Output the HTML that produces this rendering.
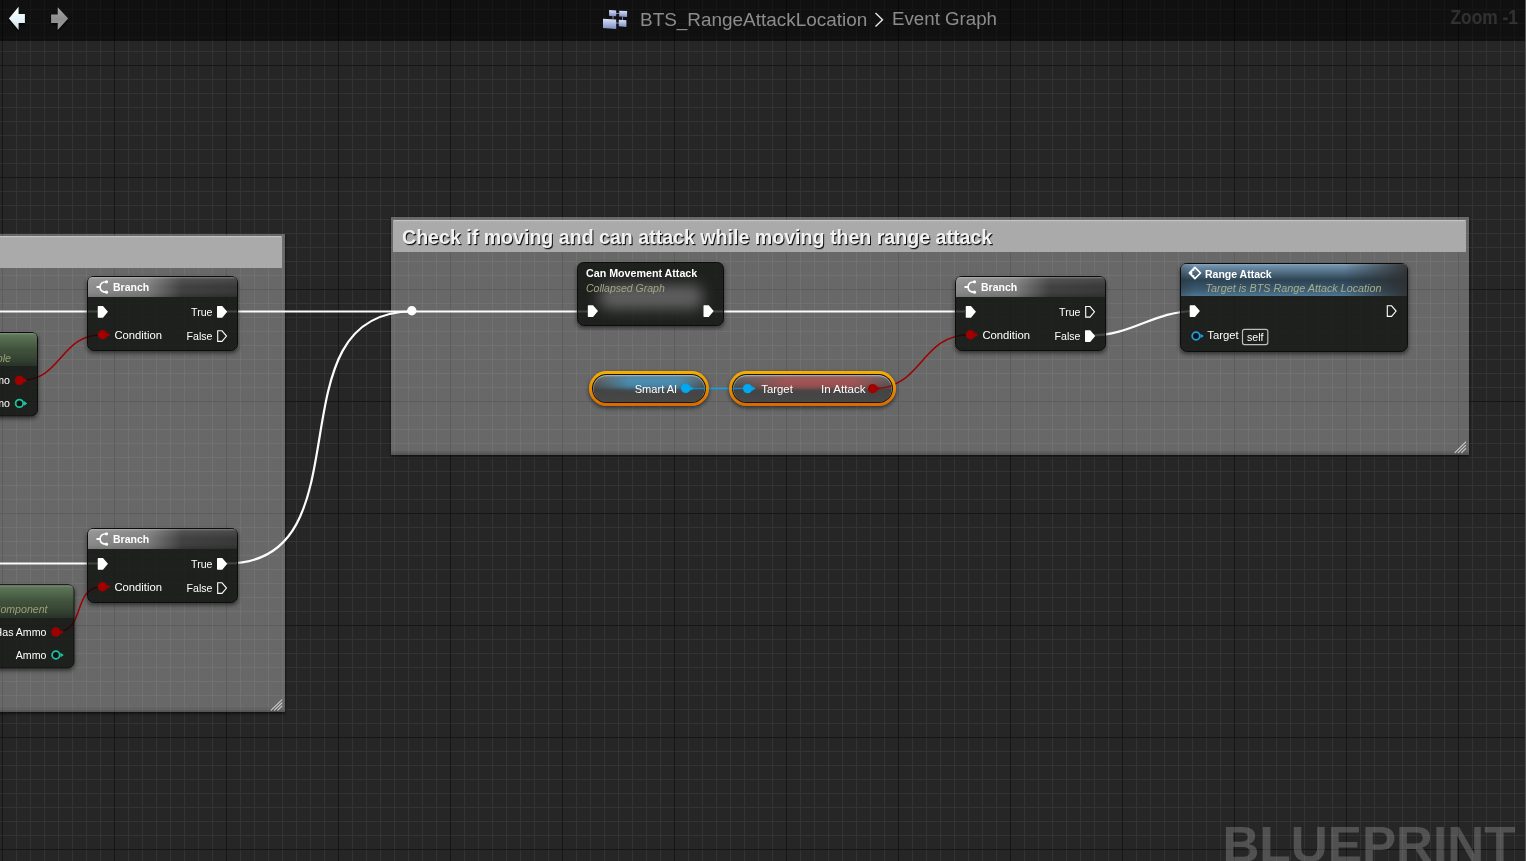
<!DOCTYPE html>
<html><head><meta charset="utf-8">
<style>
html,body{margin:0;padding:0;}
body{width:1526px;height:861px;overflow:hidden;position:relative;background:#262626;font-family:"Liberation Sans",sans-serif;}
#grid{position:absolute;left:0;top:0;width:1526px;height:861px;
background-image:
 linear-gradient(to right,#161616 1px,transparent 1px),
 linear-gradient(to bottom,#161616 1px,transparent 1px),
 linear-gradient(to right,#333333 1px,transparent 1px),
 linear-gradient(to bottom,#333333 1px,transparent 1px);
background-size:112px 100%,100% 112px,14px 100%,100% 14px;
background-position:2px 0,0 65px,2px 0,0 9px;}
svg{position:absolute;left:0;top:0;will-change:transform;}
text{font-family:"Liberation Sans",sans-serif;}
</style></head><body>
<div id="grid"></div>
<svg width="1526" height="861" viewBox="0 0 1526 861">

<defs>
  <filter id="nshd" x="-20%" y="-30%" width="140%" height="170%" color-interpolation-filters="sRGB">
    <feGaussianBlur stdDeviation="2"/>
  </filter>
  <filter id="cshd" x="-5%" y="-5%" width="110%" height="115%" color-interpolation-filters="sRGB">
    <feGaussianBlur stdDeviation="1.6"/>
  </filter>
  <filter id="tshd" x="-5%" y="-20%" width="110%" height="150%" color-interpolation-filters="sRGB">
    <feDropShadow dx="1" dy="1.2" stdDeviation="0.6" flood-color="#000" flood-opacity="0.9"/>
  </filter>
  <filter id="blur2" x="-20%" y="-80%" width="140%" height="260%" color-interpolation-filters="sRGB"><feGaussianBlur stdDeviation="2"/></filter>
  <filter id="blur3" x="-30%" y="-80%" width="160%" height="260%" color-interpolation-filters="sRGB"><feGaussianBlur stdDeviation="3"/></filter>
  <filter id="blur6" x="-50%" y="-100%" width="200%" height="300%" color-interpolation-filters="sRGB"><feGaussianBlur stdDeviation="7"/></filter>
  <filter id="arrShd" x="-30%" y="-30%" width="160%" height="180%" color-interpolation-filters="sRGB"><feDropShadow dx="0" dy="2" stdDeviation="1.2" flood-color="#000" flood-opacity="0.8"/></filter>
  <linearGradient id="gBrH" x1="0" y1="0" x2="1" y2="0">
    <stop offset="0" stop-color="#8a8a8a"/>
    <stop offset="0.4" stop-color="#7a7a7a"/>
    <stop offset="0.63" stop-color="#3b3b3b"/>
    <stop offset="1" stop-color="#313231"/>
  </linearGradient>
  <linearGradient id="gGloss" x1="0" y1="0" x2="0" y2="1">
    <stop offset="0" stop-color="#fff" stop-opacity="0.35"/>
    <stop offset="0.1" stop-color="#fff" stop-opacity="0.12"/>
    <stop offset="0.5" stop-color="#fff" stop-opacity="0.03"/>
    <stop offset="1" stop-color="#000" stop-opacity="0.12"/>
  </linearGradient>
  <linearGradient id="gGlossG" x1="0" y1="0" x2="0" y2="1">
    <stop offset="0" stop-color="#fff" stop-opacity="0.22"/>
    <stop offset="0.07" stop-color="#fff" stop-opacity="0.05"/>
    <stop offset="0.5" stop-color="#fff" stop-opacity="0"/>
    <stop offset="1" stop-color="#000" stop-opacity="0.05"/>
  </linearGradient>
  <linearGradient id="gFnH" x1="0" y1="0" x2="0" y2="1">
    <stop offset="0" stop-color="#85a4bd"/>
    <stop offset="0.08" stop-color="#6d8da7"/>
    <stop offset="0.5" stop-color="#2d4353"/>
    <stop offset="0.8" stop-color="#3a5a70"/>
    <stop offset="1" stop-color="#4e7792"/>
  </linearGradient>
  <linearGradient id="gFnR" x1="0" y1="0" x2="1" y2="0">
    <stop offset="0" stop-color="#222" stop-opacity="0.25"/>
    <stop offset="0.06" stop-color="#222" stop-opacity="0"/>
    <stop offset="0.72" stop-color="#2a2a2a" stop-opacity="0"/>
    <stop offset="1" stop-color="#2e2e2e" stop-opacity="0.9"/>
  </linearGradient>
  <linearGradient id="gGrH" x1="0" y1="0" x2="0" y2="1">
    <stop offset="0" stop-color="#587252"/>
    <stop offset="0.5" stop-color="#3f513b"/>
    <stop offset="1" stop-color="#2a3529"/>
  </linearGradient>
  <linearGradient id="gOrange" x1="0" y1="0" x2="0" y2="1">
    <stop offset="0" stop-color="#f6b000"/>
    <stop offset="1" stop-color="#d86800"/>
  </linearGradient>
  <linearGradient id="gPill" x1="0" y1="0" x2="0" y2="1">
    <stop offset="0" stop-color="#7c7c7c"/>
    <stop offset="0.15" stop-color="#626262"/>
    <stop offset="0.5" stop-color="#4a4a4a"/>
    <stop offset="0.52" stop-color="#434343"/>
    <stop offset="1" stop-color="#484848"/>
  </linearGradient>
  <linearGradient id="gCmtBot" x1="0" y1="0" x2="0" y2="1">
    <stop offset="0" stop-color="#000" stop-opacity="0"/>
    <stop offset="1" stop-color="#000" stop-opacity="0.22"/>
  </linearGradient>
  <linearGradient id="gArrL" x1="0" y1="0" x2="0" y2="1">
    <stop offset="0" stop-color="#ffffff"/><stop offset="0.6" stop-color="#e4f2f6"/><stop offset="1" stop-color="#c9dde4"/>
  </linearGradient>
  <linearGradient id="gArrR" x1="0" y1="0" x2="0" y2="1">
    <stop offset="0" stop-color="#a8a8a8"/><stop offset="0.5" stop-color="#8e8e8e"/><stop offset="1" stop-color="#9a9a9a"/>
  </linearGradient>
  <linearGradient id="gBpI" x1="0" y1="0" x2="0" y2="1">
    <stop offset="0" stop-color="#d8e0f8"/><stop offset="1" stop-color="#7f8fc4"/>
  </linearGradient>
</defs>

<mask id="cmask" maskUnits="userSpaceOnUse" x="0" y="0" width="1526" height="861"><rect x="0" y="0" width="1526" height="861" fill="#fff"/><rect x="-10" y="234" width="295" height="478" fill="#000"/><rect x="391" y="217" width="1078" height="238" fill="#000"/></mask>
<g mask="url(#cmask)" opacity="0.65"><g filter="url(#cshd)"><rect x="-10" y="235.5" width="295" height="478" fill="#000"/><rect x="391" y="218.5" width="1078" height="238" fill="#000"/></g></g>
<rect x="-10" y="234" width="295" height="478" fill="#fff" fill-opacity="0.304"/>
<rect x="-10" y="707" width="295" height="5" fill="url(#gCmtBot)"/>
<rect x="391" y="217" width="1078" height="238" fill="#fff" fill-opacity="0.304"/>
<rect x="391" y="450" width="1078" height="5" fill="url(#gCmtBot)"/>
<path d="M-10 268 V237.5 Q-10 236 -8.5 236 H280.5 Q282 236 282 237.5 V268 Z" fill="#aaaaaa"/>
<rect x="-10" y="236" width="291.5" height="1.2" fill="#c2c2c2"/>
<path d="M393 252 V221.5 Q393 220 394.5 220 H1464.5 Q1466 220 1466 221.5 V252 Z" fill="#aaaaaa"/>
<rect x="393.5" y="220" width="1072" height="1.2" fill="#c2c2c2"/>
<text x="402" y="244" font-size="19.6" font-weight="700" fill="#f2f2f2" filter="url(#tshd)">Check if moving and can attack while moving then range attack</text>
<path d="M271.2 710.2 L281.8 699.8000000000001 M274.40000000000003 710.2 L281.8 703.0 M277.8 710.2 L281.8 706.2" stroke="#cccccc" stroke-width="1.1" fill="none" stroke-linecap="round"/>
<path d="M1455.0 452.6 L1465.6 442.20000000000005 M1458.1999999999998 452.6 L1465.6 445.40000000000003 M1461.6 452.6 L1465.6 448.6" stroke="#cccccc" stroke-width="1.1" fill="none" stroke-linecap="round"/>
<path d="M222 311.5 H412" stroke="#fcfcfc" stroke-width="2.2" fill="none"/>
<path d="M227 563.5 C371 563.5 268 311.5 412 311.5" stroke="#fcfcfc" stroke-width="2.2" fill="none"/>
<path d="M222 563.5 H227.5" stroke="#fcfcfc" stroke-width="2.2" fill="none"/>
<path d="M0 311.5 H103" stroke="#fcfcfc" stroke-width="2.2" fill="none"/>
<path d="M0 563.5 H103" stroke="#fcfcfc" stroke-width="2.2" fill="none"/>
<path d="M412 311.5 H594" stroke="#fcfcfc" stroke-width="2.2" fill="none"/>
<path d="M708 311.5 H965" stroke="#fcfcfc" stroke-width="2.2" fill="none"/>
<path d="M1090 335.5 C1133.5 335.5 1152.5 311 1196 311" stroke="#fcfcfc" stroke-width="2.2" fill="none"/>
<path d="M20 380.4 C62.5 380.4 59.5 334.8 102 334.8" stroke="#a00000" stroke-width="1.5" fill="none"/>
<path d="M56 632 C86.4 632 71.6 586.8 102 586.8" stroke="#a00000" stroke-width="1.5" fill="none"/>
<path d="M873 388.6 C923.3 388.6 919.7 334.8 970 334.8" stroke="#a00000" stroke-width="1.5" fill="none"/>
<path d="M686 388.5 H748" stroke="#00a8f0" stroke-width="1.5" fill="none"/>
<mask id="nmask" maskUnits="userSpaceOnUse" x="-100" y="0" width="1700" height="861"><rect x="-100" y="0" width="1700" height="861" fill="#fff"/><rect x="-60" y="332" width="98" height="84.5" rx="6" fill="#000"/><rect x="-60" y="584.3" width="134.5" height="84.20000000000005" rx="6" fill="#000"/><rect x="87" y="276" width="151" height="75" rx="6" fill="#000"/><rect x="87" y="528" width="151" height="75" rx="6" fill="#000"/><rect x="955" y="276" width="151" height="75" rx="6" fill="#000"/><rect x="577" y="262" width="147" height="64" rx="6" fill="#000"/><rect x="1180" y="263" width="228" height="89" rx="6" fill="#000"/><rect x="589" y="371" width="120" height="35" rx="17.5" fill="#000"/><rect x="729" y="371" width="167" height="35" rx="17.5" fill="#000"/></mask>
<g mask="url(#nmask)" opacity="0.55"><g filter="url(#nshd)"><rect x="-60" y="334" width="98" height="84.5" rx="6" fill="#000"/><rect x="-60" y="586.3" width="134.5" height="84.20000000000005" rx="6" fill="#000"/><rect x="87" y="278" width="151" height="75" rx="6" fill="#000"/><rect x="87" y="530" width="151" height="75" rx="6" fill="#000"/><rect x="955" y="278" width="151" height="75" rx="6" fill="#000"/><rect x="577" y="264" width="147" height="64" rx="6" fill="#000"/><rect x="1180" y="265" width="228" height="89" rx="6" fill="#000"/><rect x="589" y="373" width="120" height="35" rx="17.5" fill="#000"/><rect x="729" y="373" width="167" height="35" rx="17.5" fill="#000"/></g></g>
<rect x="-59.5" y="332.5" width="97" height="83.5" rx="6" fill="#080a08" fill-opacity="0.77" stroke="#0c0c0c" stroke-width="1"/>
<path d="M-59 366 V338 Q-59 333 -54 333 H32 Q37 333 37 338 V366 Z" fill="url(#gGrH)"/>
<path d="M-59 366 V338 Q-59 333 -54 333 H32 Q37 333 37 338 V366 Z" fill="url(#gGlossG)"/>
<text x="11" y="361.5" font-size="10.6" font-weight="400" fill="#9c9f74" font-style="italic" text-anchor="end">Target is Ammo Variable</text>
<text x="9.899999999999999" y="384" font-size="10.6" font-weight="400" fill="#fff" text-anchor="end">Has Ammo</text>
<circle cx="19.4" cy="380.4" r="4.7" fill="#a00000"/><path d="M24.00 378.10 L27.30 380.40 L24.00 382.70 Z" fill="#a00000"/>
<text x="9.899999999999999" y="407" font-size="10.6" font-weight="400" fill="#fff" text-anchor="end">Ammo</text>
<circle cx="19.4" cy="403.4" r="3.80" fill="#111" stroke="#1fc2a0" stroke-width="1.8"/><path d="M24.00 401.10 L27.30 403.40 L24.00 405.70 Z" fill="#1fc2a0"/>
<rect x="-59.5" y="584.8" width="133.5" height="83.20000000000005" rx="6" fill="#080a08" fill-opacity="0.77" stroke="#0c0c0c" stroke-width="1"/>
<path d="M-59 618.0 V590.3 Q-59 585.3 -54 585.3 H68.5 Q73.5 585.3 73.5 590.3 V618.0 Z" fill="url(#gGrH)"/>
<path d="M-59 618.0 V590.3 Q-59 585.3 -54 585.3 H68.5 Q73.5 585.3 73.5 590.3 V618.0 Z" fill="url(#gGlossG)"/>
<text x="47.5" y="613.3" font-size="10.6" font-weight="400" fill="#9c9f74" font-style="italic" text-anchor="end">Target is Ammo Component</text>
<text x="46.4" y="635.6" font-size="10.6" font-weight="400" fill="#fff" text-anchor="end">Has Ammo</text>
<circle cx="55.9" cy="632.0" r="4.7" fill="#a00000"/><path d="M60.50 629.70 L63.80 632.00 L60.50 634.30 Z" fill="#a00000"/>
<text x="46.4" y="658.6" font-size="10.6" font-weight="400" fill="#fff" text-anchor="end">Ammo</text>
<circle cx="55.9" cy="655.0" r="3.80" fill="#111" stroke="#1fc2a0" stroke-width="1.8"/><path d="M60.50 652.70 L63.80 655.00 L60.50 657.30 Z" fill="#1fc2a0"/>
<rect x="87.5" y="276.5" width="150" height="74" rx="6" fill="#080a08" fill-opacity="0.77" stroke="#0c0c0c" stroke-width="1"/>
<path d="M88 297 V282 Q88 277 93 277 H232 Q237 277 237 282 V297 Z" fill="url(#gBrH)"/>
<path d="M88 297 V282 Q88 277 93 277 H232 Q237 277 237 282 V297 Z" fill="url(#gGloss)"/>
<path d="M106.5 281.8 Q100.1 281.8 100.1 287 Q100.1 292.2 106.5 292.2" stroke="#fff" stroke-width="1.6" fill="none"/>
<rect x="96.5" y="286" width="3.8" height="2" fill="#fff"/>
<circle cx="106.5" cy="281.8" r="1.6" fill="#fff"/><circle cx="106.5" cy="292.2" r="1.6" fill="#fff"/>
<text x="113" y="291.2" font-size="10.5" font-weight="700" fill="#fff">Branch</text>
<path transform="translate(97.75 305.75)" d="M0.6 0.3 H5.2 L10.2 6.1 L5.2 11.9 H0.6 Q0 11.9 0 11.3 V0.9 Q0 0.3 0.6 0.3 Z" fill="#fff"/>
<text x="212.5" y="315.7" font-size="10.6" font-weight="400" fill="#fff" text-anchor="end">True</text>
<path transform="translate(217 305.75)" d="M0.6 0.3 H5.2 L10.2 6.1 L5.2 11.9 H0.6 Q0 11.9 0 11.3 V0.9 Q0 0.3 0.6 0.3 Z" fill="#fff"/>
<circle cx="102.5" cy="334.8" r="4.7" fill="#a00000"/><path d="M107.10 332.50 L110.40 334.80 L107.10 337.10 Z" fill="#a00000"/>
<text x="114.5" y="339.3" font-size="10.6" font-weight="400" fill="#fff" textLength="47.5" lengthAdjust="spacingAndGlyphs">Condition</text>
<text x="212.5" y="339.5" font-size="10.6" font-weight="400" fill="#fff" text-anchor="end">False</text>
<path transform="translate(217 330)" d="M0.7 0.8 H5 L9.5 6.1 L5 11.4 H0.7 V0.8 Z" fill="none" stroke="#fff" stroke-width="1.1"/>
<rect x="87.5" y="528.5" width="150" height="74" rx="6" fill="#080a08" fill-opacity="0.77" stroke="#0c0c0c" stroke-width="1"/>
<path d="M88 549 V534 Q88 529 93 529 H232 Q237 529 237 534 V549 Z" fill="url(#gBrH)"/>
<path d="M88 549 V534 Q88 529 93 529 H232 Q237 529 237 534 V549 Z" fill="url(#gGloss)"/>
<path d="M106.5 533.8 Q100.1 533.8 100.1 539 Q100.1 544.2 106.5 544.2" stroke="#fff" stroke-width="1.6" fill="none"/>
<rect x="96.5" y="538" width="3.8" height="2" fill="#fff"/>
<circle cx="106.5" cy="533.8" r="1.6" fill="#fff"/><circle cx="106.5" cy="544.2" r="1.6" fill="#fff"/>
<text x="113" y="543.2" font-size="10.5" font-weight="700" fill="#fff">Branch</text>
<path transform="translate(97.75 557.75)" d="M0.6 0.3 H5.2 L10.2 6.1 L5.2 11.9 H0.6 Q0 11.9 0 11.3 V0.9 Q0 0.3 0.6 0.3 Z" fill="#fff"/>
<text x="212.5" y="567.7" font-size="10.6" font-weight="400" fill="#fff" text-anchor="end">True</text>
<path transform="translate(217 557.75)" d="M0.6 0.3 H5.2 L10.2 6.1 L5.2 11.9 H0.6 Q0 11.9 0 11.3 V0.9 Q0 0.3 0.6 0.3 Z" fill="#fff"/>
<circle cx="102.5" cy="586.8" r="4.7" fill="#a00000"/><path d="M107.10 584.50 L110.40 586.80 L107.10 589.10 Z" fill="#a00000"/>
<text x="114.5" y="591.3" font-size="10.6" font-weight="400" fill="#fff" textLength="47.5" lengthAdjust="spacingAndGlyphs">Condition</text>
<text x="212.5" y="591.5" font-size="10.6" font-weight="400" fill="#fff" text-anchor="end">False</text>
<path transform="translate(217 582)" d="M0.7 0.8 H5 L9.5 6.1 L5 11.4 H0.7 V0.8 Z" fill="none" stroke="#fff" stroke-width="1.1"/>
<rect x="955.5" y="276.5" width="150" height="74" rx="6" fill="#080a08" fill-opacity="0.77" stroke="#0c0c0c" stroke-width="1"/>
<path d="M956 297 V282 Q956 277 961 277 H1100 Q1105 277 1105 282 V297 Z" fill="url(#gBrH)"/>
<path d="M956 297 V282 Q956 277 961 277 H1100 Q1105 277 1105 282 V297 Z" fill="url(#gGloss)"/>
<path d="M974.5 281.8 Q968.1 281.8 968.1 287 Q968.1 292.2 974.5 292.2" stroke="#fff" stroke-width="1.6" fill="none"/>
<rect x="964.5" y="286" width="3.8" height="2" fill="#fff"/>
<circle cx="974.5" cy="281.8" r="1.6" fill="#fff"/><circle cx="974.5" cy="292.2" r="1.6" fill="#fff"/>
<text x="981" y="291.2" font-size="10.5" font-weight="700" fill="#fff">Branch</text>
<path transform="translate(965.75 305.75)" d="M0.6 0.3 H5.2 L10.2 6.1 L5.2 11.9 H0.6 Q0 11.9 0 11.3 V0.9 Q0 0.3 0.6 0.3 Z" fill="#fff"/>
<text x="1080.5" y="315.7" font-size="10.6" font-weight="400" fill="#fff" text-anchor="end">True</text>
<path transform="translate(1085 305.75)" d="M0.7 0.8 H5 L9.5 6.1 L5 11.4 H0.7 V0.8 Z" fill="none" stroke="#fff" stroke-width="1.1"/>
<circle cx="970.5" cy="334.8" r="4.7" fill="#a00000"/><path d="M975.10 332.50 L978.40 334.80 L975.10 337.10 Z" fill="#a00000"/>
<text x="982.5" y="339.3" font-size="10.6" font-weight="400" fill="#fff" textLength="47.5" lengthAdjust="spacingAndGlyphs">Condition</text>
<text x="1080.5" y="339.5" font-size="10.6" font-weight="400" fill="#fff" text-anchor="end">False</text>
<path transform="translate(1085 330)" d="M0.6 0.3 H5.2 L10.2 6.1 L5.2 11.9 H0.6 Q0 11.9 0 11.3 V0.9 Q0 0.3 0.6 0.3 Z" fill="#fff"/>
<rect x="577.5" y="262.5" width="146" height="63" rx="6" fill="#080a08" fill-opacity="0.77" stroke="#0c0c0c" stroke-width="1"/>
<rect x="599" y="285" width="104" height="24" rx="10" fill="#8c8c8c" fill-opacity="0.6" filter="url(#blur6)"/>
<text x="586" y="276.8" font-size="10.7" font-weight="700" fill="#fff">Can Movement Attack</text>
<text x="586" y="291.7" font-size="10.5" font-weight="400" fill="#a5a582" font-style="italic">Collapsed Graph</text>
<path transform="translate(587.8 305)" d="M0.6 0.3 H5.2 L10.2 6.1 L5.2 11.9 H0.6 Q0 11.9 0 11.3 V0.9 Q0 0.3 0.6 0.3 Z" fill="#fff"/>
<path transform="translate(703.5 305)" d="M0.6 0.3 H5.2 L10.2 6.1 L5.2 11.9 H0.6 Q0 11.9 0 11.3 V0.9 Q0 0.3 0.6 0.3 Z" fill="#fff"/>
<rect x="1180.5" y="263.5" width="227" height="88" rx="6" fill="#080a08" fill-opacity="0.77" stroke="#0c0c0c" stroke-width="1"/>
<path d="M1181 296 V269 Q1181 264 1186 264 H1402 Q1407 264 1407 269 V296 Z" fill="url(#gFnH)"/>
<path d="M1181 296 V269 Q1181 264 1186 264 H1402 Q1407 264 1407 269 V296 Z" fill="url(#gFnR)"/>
<path d="M1194.9 267.4 L1200.5 273 L1194.9 278.6 L1189.3000000000002 273 Z" stroke="#fff" stroke-width="1.7" fill="none" stroke-linejoin="round"/>
<path d="M1189.3000000000002 273 L1194.3000000000002 268 V270.8 H1192.3000000000002 V275.2 H1194.3000000000002 V278 Z" fill="#fff"/>
<text x="1205" y="277.5" font-size="10.5" font-weight="700" fill="#fff">Range Attack</text>
<text x="1205.5" y="292.4" font-size="10.7" font-weight="400" fill="#a9ad8a" font-style="italic" textLength="176" lengthAdjust="spacingAndGlyphs">Target is BTS Range Attack Location</text>
<path transform="translate(1189.7 305)" d="M0.6 0.3 H5.2 L10.2 6.1 L5.2 11.9 H0.6 Q0 11.9 0 11.3 V0.9 Q0 0.3 0.6 0.3 Z" fill="#fff"/>
<path transform="translate(1386.6 305)" d="M0.7 0.8 H5 L9.5 6.1 L5 11.4 H0.7 V0.8 Z" fill="none" stroke="#fff" stroke-width="1.1"/>
<circle cx="1196" cy="336" r="3.80" fill="#111" stroke="#1b9fe0" stroke-width="1.8"/><path d="M1200.60 333.70 L1203.90 336.00 L1200.60 338.30 Z" fill="#1b9fe0"/>
<text x="1207.3" y="339.2" font-size="10.6" font-weight="400" fill="#fff" textLength="31.4" lengthAdjust="spacingAndGlyphs">Target</text>
<rect x="1242.5" y="329.3" width="25.3" height="15.3" rx="2" fill="none" stroke="#bdbdbd" stroke-width="1.2"/>
<text x="1255.2" y="341" font-size="10.6" font-weight="400" fill="#fff" text-anchor="middle">self</text>
<rect x="589" y="371" width="120" height="35" rx="17.5" fill="url(#gOrange)"/>
<rect x="592" y="374" width="114" height="29" rx="14.5" fill="#161410"/>
<clipPath id="pc1"><rect x="593" y="375" width="112" height="27" rx="13.5"/></clipPath>
<g clip-path="url(#pc1)">
<rect x="593" y="375" width="112" height="27" fill="url(#gPill)"/>
<linearGradient id="pt1" gradientUnits="userSpaceOnUse" x1="596" y1="0" x2="706" y2="0"><stop offset="0" stop-color="#3fa8e0" stop-opacity="0"/><stop offset="0.3" stop-color="#3fa8e0" stop-opacity="0.62"/><stop offset="0.75" stop-color="#3fa8e0" stop-opacity="0.62"/><stop offset="1" stop-color="#3fa8e0" stop-opacity="0"/></linearGradient>
<rect x="596" y="376" width="110" height="12.5" fill="url(#pt1)" filter="url(#blur2)"/>
<rect x="593" y="375" width="112" height="27" rx="13.5" fill="none" stroke="#fff" stroke-opacity="0.35" stroke-width="1.2" transform="translate(0 0.6)"/>
</g>
<text x="677.2" y="392.7" font-size="10.5" font-weight="400" fill="#fff" text-anchor="end" textLength="42.5" lengthAdjust="spacingAndGlyphs">Smart AI</text>
<path d="M686 388.5 H705.5" stroke="#1488c0" stroke-width="1.5"/>
<circle cx="685.7" cy="388.4" r="4.7" fill="#00a8f0"/><path d="M690.30 386.10 L693.60 388.40 L690.30 390.70 Z" fill="#00a8f0"/>
<rect x="729" y="371" width="167" height="35" rx="17.5" fill="url(#gOrange)"/>
<rect x="732" y="374" width="161" height="29" rx="14.5" fill="#161410"/>
<clipPath id="pc2"><rect x="733" y="375" width="159" height="27" rx="13.5"/></clipPath>
<g clip-path="url(#pc2)">
<rect x="733" y="375" width="159" height="27" fill="url(#gPill)"/>
<linearGradient id="pt2" gradientUnits="userSpaceOnUse" x1="740" y1="0" x2="892" y2="0"><stop offset="0" stop-color="#c85050" stop-opacity="0"/><stop offset="0.3" stop-color="#c85050" stop-opacity="0.62"/><stop offset="0.75" stop-color="#c85050" stop-opacity="0.62"/><stop offset="1" stop-color="#c85050" stop-opacity="0"/></linearGradient>
<rect x="740" y="376" width="152" height="12.5" fill="url(#pt2)" filter="url(#blur2)"/>
<rect x="733" y="375" width="159" height="27" rx="13.5" fill="none" stroke="#fff" stroke-opacity="0.35" stroke-width="1.2" transform="translate(0 0.6)"/>
</g>
<path d="M732.5 388.5 H748" stroke="#1488c0" stroke-width="1.5"/>
<circle cx="747.6" cy="388.6" r="4.7" fill="#00a8f0"/><path d="M752.20 386.30 L755.50 388.60 L752.20 390.90 Z" fill="#00a8f0"/>
<text x="761.3" y="392.8" font-size="10.6" font-weight="400" fill="#fff" textLength="31.5" lengthAdjust="spacingAndGlyphs">Target</text>
<text x="865.5" y="392.8" font-size="10.6" font-weight="400" fill="#fff" text-anchor="end" textLength="44.5" lengthAdjust="spacingAndGlyphs">In Attack</text>
<clipPath id="iac"><rect x="733" y="375" width="159" height="27" rx="13.5"/></clipPath><g clip-path="url(#iac)"><path d="M873 388.6 C923.3 388.6 919.7 334.8 970 334.8" stroke="#900808" stroke-width="1.5" fill="none"/></g>
<circle cx="872.7" cy="388.6" r="4.7" fill="#a00000"/><path d="M877.30 386.30 L880.60 388.60 L877.30 390.90 Z" fill="#a00000"/>
<circle cx="411.8" cy="310.8" r="4.7" fill="#fff"/>
<rect x="0" y="0" width="1525" height="41" fill="#000" fill-opacity="0.57"/>
<rect x="1525" y="0" width="1" height="861" fill="#555"/>
<text x="1222.5" y="862" font-size="50.6" font-weight="700" fill="#fff" fill-opacity="0.2" textLength="293" lengthAdjust="spacingAndGlyphs">BLUEPRINT</text>
<text x="1450.5" y="24" font-size="20" font-weight="700" fill="#fff" fill-opacity="0.135" textLength="67.5" lengthAdjust="spacingAndGlyphs">Zoom -1</text>
<path d="M8.9 18.6 L18.6 6.8 V13.9 H24.9 V23.1 H18.6 V29.9 Z" fill="url(#gArrL)" filter="url(#arrShd)"/>
<path d="M68.2 18.6 L57.7 7.3 V14.4 H51.1 V23.1 H57.7 V29.9 Z" fill="url(#gArrR)" filter="url(#arrShd)"/>
<g stroke="#9aa6d0" stroke-width="0.8"><path d="M613 16 V19 M616 13.5 H619 M622.5 17 V20 M616 23 H619"/></g>
<path d="M609.1 10.1 L616.2 10.5 V16.2 L609.1 16 Z" fill="url(#gBpI)"/>
<path d="M619.2 10.7 L627.1 11.1 V16.9 L619.2 16.6 Z" fill="url(#gBpI)"/>
<path d="M603 18.7 L616.2 19.5 V28.9 L603 28 Z" fill="url(#gBpI)"/>
<path d="M618.8 19.8 L626.4 20.2 V26.9 L618.8 26.3 Z" fill="url(#gBpI)"/>
<text x="640" y="25.5" font-size="18.6" fill="#8c8c8c" textLength="227.3" lengthAdjust="spacingAndGlyphs">BTS_RangeAttackLocation</text>
<path d="M875.5 13 L882.5 19.7 L875.5 26.5" stroke="#e8e8e8" stroke-width="1.4" fill="none"/>
<text x="892" y="25" font-size="18.3" fill="#8c8c8c" textLength="105" lengthAdjust="spacingAndGlyphs">Event Graph</text>
</svg>
</body></html>
